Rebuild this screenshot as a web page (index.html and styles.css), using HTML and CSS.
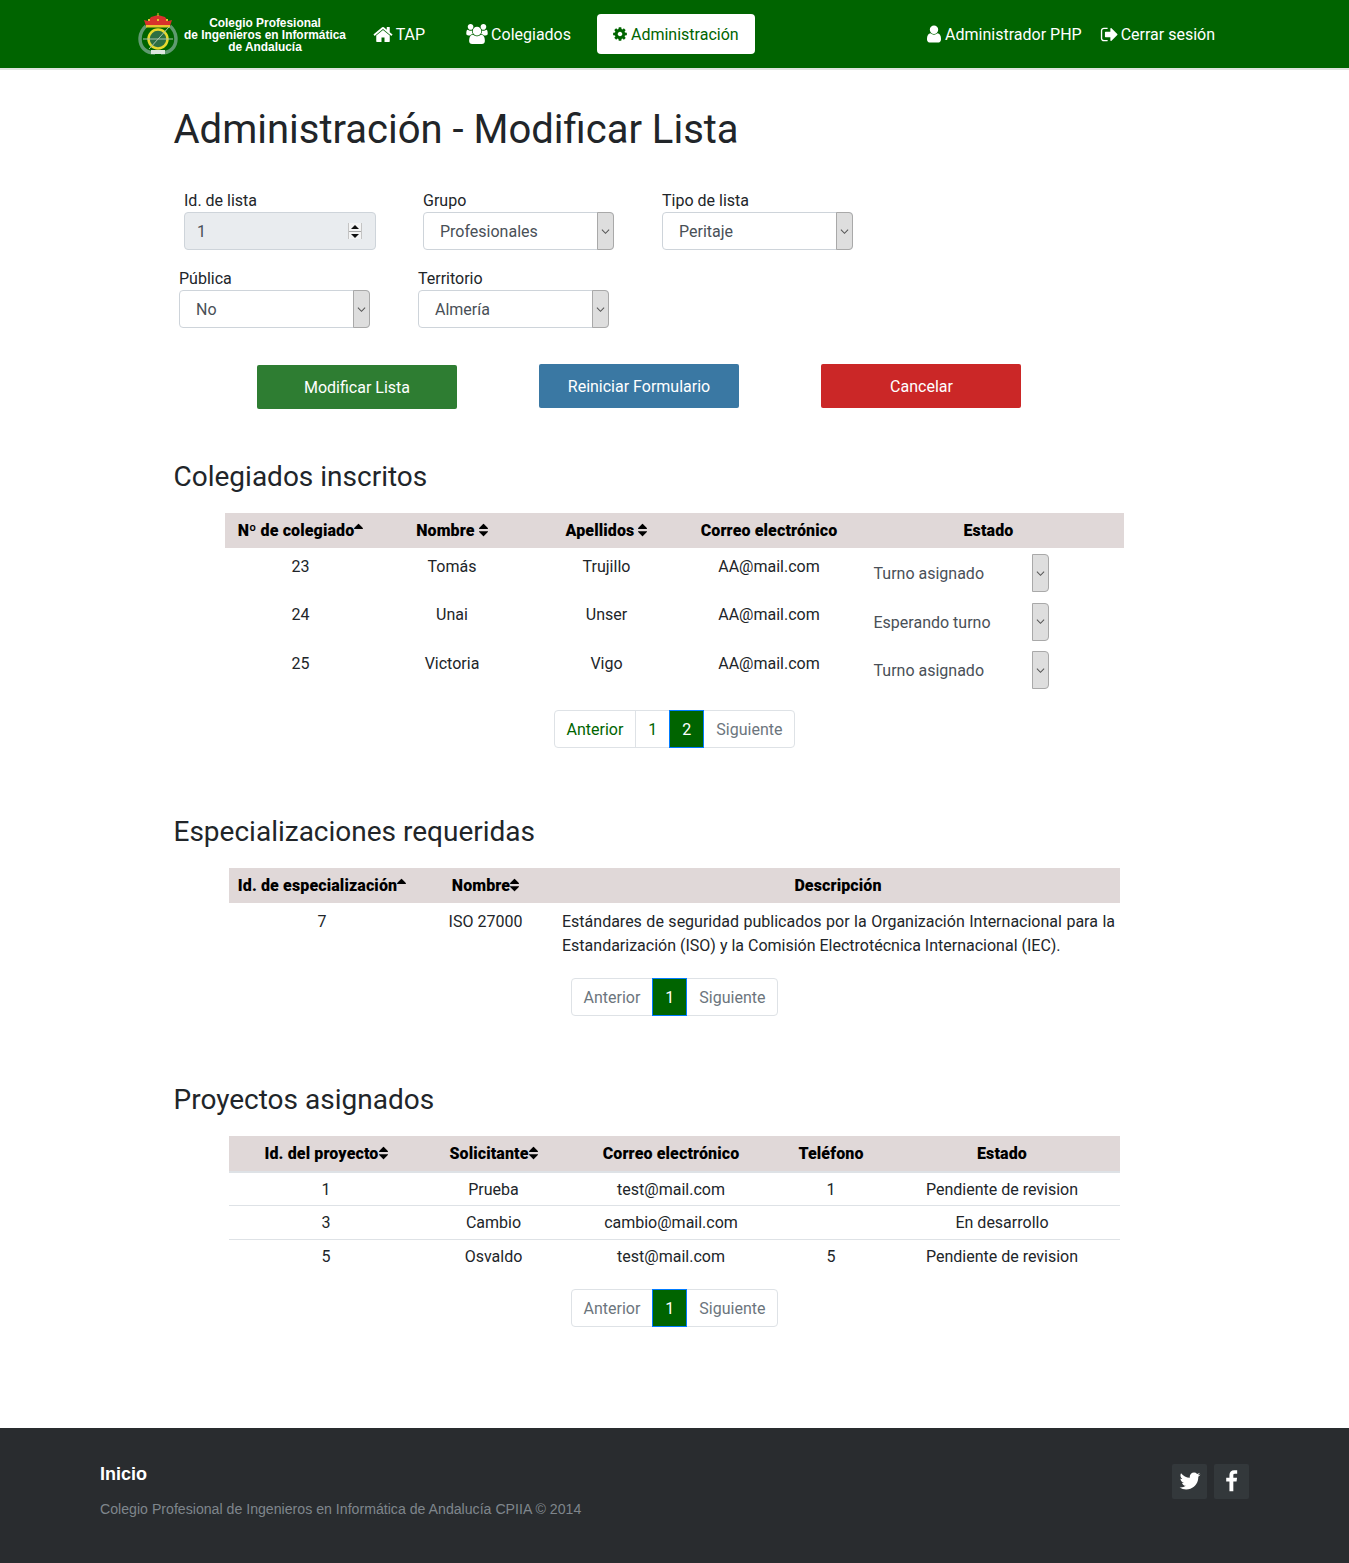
FILE: index.html
```html
<!DOCTYPE html>
<html lang="es">
<head>
<meta charset="utf-8">
<title>Administración - Modificar Lista</title>
<link rel="stylesheet" href="styles.css">
</head>
<body>

<svg class="defs" width="0" height="0">
  <symbol id="i-home" viewBox="0 0 1664 1792"><path d="M1408 992v480q0 26-19 45t-45 19h-384v-384h-256v384h-384q-26 0-45-19t-19-45v-480q0-1 .5-3t.5-3l575-474 575 474q1 2 1 6zm223-69l-62 74q-8 9-21 11h-3q-13 0-21-7l-692-577-692 577q-12 8-24 7-13-2-21-11l-62-74q-8-10-7-23.500t11-21.500l719-599q32-26 76-26t76 26l244 204v-195q0-14 9-23t23-9h192q14 0 23 9t9 23v408l219 182q10 8 11 21.500t-7 23.500z"/></symbol>
  <symbol id="i-users" viewBox="0 0 1920 1792"><path d="M593 896q-162 5-265 128h-134q-82 0-138-40.500t-56-118.500q0-353 124-353 6 0 43.500 21t97.500 42.500 119 21.500q67 0 133-23-5 37-5 66 0 139 81 256zm1071 637q0 120-73 189.500t-194 69.500h-874q-121 0-194-69.500t-73-189.500q0-53 3.500-103.500t14-109 26.500-108.500 43-97.500 62-81 85.500-53.500 111.500-20q10 0 43 21.500t73 48 107 48 135 21.500 135-21.500 107-48 73-48 43-21.500q61 0 111.500 20t85.500 53.500 62 81 43 97.500 26.500 108.500 14 109 3.500 103.500zm-1024-1277q0 106-75 181t-181 75-181-75-75-181 75-181 181-75 181 75 75 181zm704 384q0 159-112.500 271.500t-271.500 112.500-271.500-112.500-112.500-271.500 112.500-271.500 271.500-112.500 271.500 112.500 112.500 271.500zm576 225q0 78-56 118.500t-138 40.500h-134q-103-123-265-128 81-117 81-256 0-29-5-66 66 23 133 23 59 0 119-21.500t97.500-42.500 43.500-21q124 0 124 353zm-128-609q0 106-75 181t-181 75-181-75-75-181 75-181 181-75 181 75 75 181z"/></symbol>
  <symbol id="i-cog" viewBox="0 0 1536 1792"><path d="M1024 896q0-106-75-181t-181-75-181 75-75 181 75 181 181 75 181-75 75-181zm512-109v222q0 12-8 23t-20 13l-185 28q-19 54-39 91 35 50 107 138 10 12 10 25t-9 23q-27 37-99 108t-94 71q-12 0-26-9l-138-108q-44 23-91 38-16 136-29 186-7 28-36 28h-222q-14 0-24.500-8.500t-11.500-21.500l-28-184q-49-16-90-37l-141 107q-10 9-25 9-14 0-25-11-126-114-165-168-7-10-7-23 0-12 8-23 15-21 51-66.500t54-70.500q-27-50-41-99l-183-27q-13-2-21-12.500t-8-23.500v-222q0-12 8-23t19-13l186-28q14-46 39-92-40-57-107-138-10-12-10-24 0-10 9-23 26-36 98.500-107.500t94.500-71.500q13 0 26 10l138 107q44-23 91-38 16-136 29-186 7-28 36-28h222q14 0 24.500 8.500t11.500 21.500l28 184q49 16 90 37l142-107q9-9 24-9 13 0 25 10 129 119 165 170 7 8 7 22 0 12-8 23-15 21-51 66.500t-54 70.500q26 50 41 98l183 28q13 2 21 12.500t8 23.500z"/></symbol>
  <symbol id="i-user" viewBox="0 0 1280 1792"><path d="M1280 1399q0 109-62.500 187t-150.500 78h-854q-88 0-150.500-78t-62.500-187q0-85 8.500-160.500t31.500-152 58.500-131 94-89 134.500-34.500q131 128 313 128t313-128q76 0 134.500 34.500t94 89 58.500 131 31.500 152 8.500 160.500zm-256-887q0 159-112.500 271.500t-271.500 112.500-271.500-112.500-112.500-271.500 112.500-271.500 271.500-112.500 271.500 112.500 112.500 271.500z"/></symbol>
  <symbol id="i-out" viewBox="0 0 1664 1792"><path d="M704 1440q0 4 1 20t.5 26.500-3 23.500-10 19.500-20.500 6.500h-320q-119 0-203.500-84.500t-84.500-203.500v-704q0-119 84.500-203.500t203.500-84.500h320q13 0 22.500 9.500t9.500 22.500q0 4 1 20t.5 26.500-3 23.500-10 19.500-20.500 6.500h-320q-66 0-113 47t-47 113v704q0 66 47 113t113 47h312l11.500 1 11.500 3 8 5.500 7 9 2 13.500zm928-544q0 26-19 45l-544 544q-19 19-45 19t-45-19-19-45v-288h-448q-26 0-45-19t-19-45v-384q0-26 19-45t45-19h448v-288q0-26 19-45t45-19 45 19l544 544q19 19 19 45z"/></symbol>
  <symbol id="i-sort" viewBox="0 0 1024 1792"><path d="M1024 1088q0 26-19 45l-448 448q-19 19-45 19t-45-19l-448-448q-19-19-19-45t19-45 45-19h896q26 0 45 19t19 45zm0-384q0 26-19 45t-45 19h-896q-26 0-45-19t-19-45 19-45l448-448q19-19 45-19t45 19l448 448q19 19 19 45z"/></symbol>
  <symbol id="i-asc" viewBox="0 0 1024 1792"><path d="M1024 704q0 26-19 45t-45 19h-896q-26 0-45-19t-19-45 19-45l448-448q19-19 45-19t45 19l448 448q19 19 19 45z"/></symbol>
  <symbol id="i-chev" viewBox="0 0 8 6"><path d="M.8 1.4 4 4.6l3.200-3.200" fill="none" stroke="#555" stroke-width=".9"/></symbol>
  <symbol id="i-tw" viewBox="0 0 1664 1792"><path d="M1620 408q-67 98-162 167 1 14 1 42 0 130-38 259.500t-115.500 248.500-184.500 210.500-258 146-323 54.500q-271 0-496-145 35 4 78 4 225 0 401-138-105-2-188-64.500t-114-159.500q33 5 61 5 43 0 85-11-112-23-185.500-111.500t-73.500-205.500v-4q68 38 146 41-66-44-105-115t-39-154q0-88 44-163 121 149 294.500 238.500t371.500 99.500q-8-38-8-74 0-134 94.500-228.500t228.500-94.500q140 0 236 102 109-21 205-78-37 115-142 178 92-10 184-50z"/></symbol>
  <symbol id="i-fb" viewBox="0 0 1024 1792"><path d="M959 12v264h-157q-86 0-116 36t-30 108v189h293l-39 296h-254v759h-306v-759h-255v-296h255v-218q0-186 104-288.500t277-102.500q147 0 228 12z"/></symbol>
</svg>

<nav class="barra">
  <svg class="escudo" viewBox="0 0 40 42" width="40" height="42">
    <path d="M8 13C1 19 0 30 6 36c3 3 7 4 11 4" fill="none" stroke="#5f9a70" stroke-width="3.500"/>
    <path d="M32 13c7 6 8 17 2 23-3 3-7 4-11 4" fill="none" stroke="#5f9a70" stroke-width="3.500"/>
    <path d="M8 13 6 7l4 1 3-4 7-2 7 2 3 4 4-1-2 6z" fill="#d8322c"/>
    <path d="M8 12h24v2.500H8z" fill="#e8c62e"/>
    <path d="M19.500 0h1v3h-1zM10 6h2v2h-2zM19 6h2v2h-2zM28 6h2v2h-2z" fill="#e8c62e"/>
    <circle cx="20" cy="26" r="9.500" fill="#2d6f42" stroke="#e8d92e" stroke-width="2.500"/>
    <path d="M5 26h30M31 14 11 36" stroke="#a9c4ae" stroke-width="1"/>
    <path d="M13 37h14v4H13z" fill="#dfe8e0"/>
  </svg>
  <div class="marca">Colegio Profesional<br>de Ingenieros en Informática<br>de Andalucía</div>
  <a class="enlace"><svg class="ico ico-home"><use href="#i-home"/></svg> TAP</a>
  <a class="enlace"><svg class="ico ico-users"><use href="#i-users"/></svg> Colegiados</a>
  <a class="enlace activo"><svg class="ico ico-cog"><use href="#i-cog"/></svg> Administración</a>
  <div class="usuario">
    <a><svg class="ico ico-user"><use href="#i-user"/></svg> Administrador PHP</a>
    <a><svg class="ico ico-out"><use href="#i-out"/></svg> Cerrar sesión</a>
  </div>
</nav>

<main class="contenido">
  <h1>Administración - Modificar Lista</h1>

  <div class="fila fila-a">
    <div class="campo">
      <label>Id. de lista</label>
      <div class="control bloqueado">
        <span class="valor-num">1</span>
        <span class="giro"><i class="giro-up"></i><i class="giro-down"></i></span>
      </div>
    </div>
    <div class="campo">
      <label>Grupo</label>
      <div class="control"><span class="valor">Profesionales</span><span class="flecha"><svg><use href="#i-chev"/></svg></span></div>
    </div>
    <div class="campo">
      <label>Tipo de lista</label>
      <div class="control"><span class="valor">Peritaje</span><span class="flecha"><svg><use href="#i-chev"/></svg></span></div>
    </div>
  </div>
  <div class="fila fila-b">
    <div class="campo">
      <label>Pública</label>
      <div class="control"><span class="valor">No</span><span class="flecha"><svg><use href="#i-chev"/></svg></span></div>
    </div>
    <div class="campo">
      <label>Territorio</label>
      <div class="control"><span class="valor">Almería</span><span class="flecha"><svg><use href="#i-chev"/></svg></span></div>
    </div>
  </div>

  <div class="botones">
    <button class="btn verde">Modificar Lista</button>
    <button class="btn azul">Reiniciar Formulario</button>
    <button class="btn rojo">Cancelar</button>
  </div>

  <h3 class="titulo-primero">Colegiados inscritos</h3>
  <div class="bloque ancho">
    <table class="tabla t1">
      <colgroup><col class="c151"><col class="c152"><col class="c157"><col class="c168"><col></colgroup>
      <thead>
        <tr>
          <th>Nº de colegiado<svg class="orden"><use href="#i-asc"/></svg></th>
          <th>Nombre <svg class="orden"><use href="#i-sort"/></svg></th>
          <th>Apellidos <svg class="orden"><use href="#i-sort"/></svg></th>
          <th>Correo electrónico</th>
          <th>Estado</th>
        </tr>
      </thead>
      <tbody>
        <tr>
          <td>23</td><td>Tomás</td><td>Trujillo</td><td>AA@mail.com</td>
          <td class="celda-sel"><div class="control sin-borde"><span class="valor">Turno asignado</span><span class="flecha"><svg><use href="#i-chev"/></svg></span></div></td>
        </tr>
        <tr>
          <td>24</td><td>Unai</td><td>Unser</td><td>AA@mail.com</td>
          <td class="celda-sel"><div class="control sin-borde"><span class="valor">Esperando turno</span><span class="flecha"><svg><use href="#i-chev"/></svg></span></div></td>
        </tr>
        <tr>
          <td>25</td><td>Victoria</td><td>Vigo</td><td>AA@mail.com</td>
          <td class="celda-sel"><div class="control sin-borde"><span class="valor">Turno asignado</span><span class="flecha"><svg><use href="#i-chev"/></svg></span></div></td>
        </tr>
      </tbody>
    </table>
    <ul class="paginas">
      <li class="verde-txt">Anterior</li>
      <li class="verde-txt">1</li>
      <li class="actual">2</li>
      <li>Siguiente</li>
    </ul>
  </div>

  <h3>Especializaciones requeridas</h3>
  <div class="bloque estrecho">
    <table class="tabla t2">
      <colgroup><col class="c186"><col class="c141"><col></colgroup>
      <thead>
        <tr>
          <th>Id. de especialización<svg class="orden"><use href="#i-asc"/></svg></th>
          <th>Nombre<svg class="orden"><use href="#i-sort"/></svg></th>
          <th>Descripción</th>
        </tr>
      </thead>
      <tbody>
        <tr>
          <td>7</td><td>ISO 27000</td>
          <td class="texto">Estándares de seguridad publicados por la Organización Internacional para la Estandarización (ISO) y la Comisión Electrotécnica Internacional (IEC).</td>
        </tr>
      </tbody>
    </table>
    <ul class="paginas">
      <li>Anterior</li>
      <li class="actual">1</li>
      <li>Siguiente</li>
    </ul>
  </div>

  <h3>Proyectos asignados</h3>
  <div class="bloque estrecho">
    <table class="tabla t3">
      <colgroup><col class="c194"><col class="c141"><col class="c214"><col class="c106"><col></colgroup>
      <thead>
        <tr>
          <th>Id. del proyecto<svg class="orden"><use href="#i-sort"/></svg></th>
          <th>Solicitante<svg class="orden"><use href="#i-sort"/></svg></th>
          <th>Correo electrónico</th>
          <th>Teléfono</th>
          <th>Estado</th>
        </tr>
      </thead>
      <tbody>
        <tr><td>1</td><td>Prueba</td><td>test@mail.com</td><td>1</td><td>Pendiente de revision</td></tr>
        <tr><td>3</td><td>Cambio</td><td>cambio@mail.com</td><td></td><td>En desarrollo</td></tr>
        <tr><td>5</td><td>Osvaldo</td><td>test@mail.com</td><td>5</td><td>Pendiente de revision</td></tr>
      </tbody>
    </table>
    <ul class="paginas">
      <li>Anterior</li>
      <li class="actual">1</li>
      <li>Siguiente</li>
    </ul>
  </div>
</main>

<footer class="pie">
  <div>
    <div class="pie-inicio">Inicio</div>
    <div class="pie-copy">Colegio Profesional de Ingenieros en Informática de Andalucía CPIIA © 2014</div>
  </div>
  <div class="redes">
    <a class="red"><svg class="ico-tw"><use href="#i-tw"/></svg></a>
    <a class="red"><svg class="ico-fb"><use href="#i-fb"/></svg></a>
  </div>
</footer>

</body>
</html>
```

FILE: styles.css
```css
* {
    box-sizing: border-box;
}

body {
    margin: 0;
    font-family: "Roboto", "Liberation Sans", sans-serif;
    font-size: 16px;
    line-height: 24px;
    color: #212529;
    background-color: #fff;
}

.defs {
    position: absolute;
}

/* barra superior */
.barra {
    display: flex;
    align-items: center;
    height: 70px;
    padding: 0 134px 0 138px;
    background-color: #006400;
    border-bottom: 2px solid #dfe3df;
    color: #fff;
}

.escudo {
    flex: none;
}

.marca {
    width: 162px;
    margin-left: 6px;
    padding-top: 2px;
    font-family: "Liberation Sans", sans-serif;
    font-size: 11.900px;
    font-weight: bold;
    line-height: 12px;
    text-align: center;
    white-space: nowrap;
}

.enlace {
    display: flex;
    align-items: center;
    height: 40px;
    padding: 2px 16px 0;
    margin-left: 10px;
    border-radius: 4px;
    white-space: pre;
}

.marca + .enlace {
    margin-left: 12px;
}

.activo {
    background-color: #fff;
    color: #006400;
}

.ico {
    fill: currentColor;
    flex: none;
}

.ico-home {
    width: 20px;
    height: 21px;
    margin: -2px -1px 0;
}

.ico-users {
    width: 22px;
    height: 20px;
    margin: -2px -1px 0;
}

.ico-cog {
    width: 14px;
    height: 16px;
    margin-top: -2px;
}

.ico-user {
    width: 14px;
    height: 20px;
    margin-top: -2px;
}

.ico-out {
    width: 18px;
    height: 19px;
    margin: -2px -1px 0;
}

.usuario {
    display: flex;
    gap: 19px;
    margin-left: auto;
    padding-top: 2px;
}

.usuario a {
    display: flex;
    align-items: center;
    white-space: pre;
}

/* contenido */
.contenido {
    width: 1001px;
    margin: 0 auto;
}

h1 {
    margin: 36px 0 34px -.5px;
    font-size: 40px;
    font-weight: 400;
    line-height: 48px;
}

h3 {
    margin: 67px 0 19px -.5px;
    font-size: 28px;
    font-weight: 400;
    line-height: 34px;
}

.titulo-primero {
    margin-top: 51px;
}

.fila {
    display: flex;
    gap: 48px;
}

.fila-a {
    padding-left: 10px;
    margin-bottom: 16px;
}

.fila-b {
    padding-left: 5px;
}

.campo {
    width: 191px;
}

.campo label {
    display: block;
    height: 24px;
    padding-top: 1px;
}

.control {
    display: flex;
    align-items: center;
    justify-content: space-between;
    height: 38px;
    border: 1px solid #ced4da;
    border-radius: 4px;
    color: #495057;
    background-color: #fff;
}

.bloqueado {
    width: 192px;
    background-color: #e9ecef;
}

.valor {
    padding: 2px 0 0 16px;
}

.valor-num {
    padding: 2px 0 0 12px;
}

.flecha {
    display: flex;
    align-items: center;
    justify-content: center;
    align-self: stretch;
    width: 17px;
    margin: -1px -1px -1px 0;
    background-color: #dedede;
    border: 1px solid #a9a9a9;
    border-radius: 0 4px 4px 0;
}

.flecha svg {
    width: 9px;
    height: 7px;
}

.giro {
    display: flex;
    flex-direction: column;
    width: 14px;
    height: 16px;
    margin-right: 13px;
    background-color: #f4f4f4;
    border-left: 1px solid #c4c4c4;
    border-right: 1px solid #c4c4c4;
}

.giro i {
    flex: 1;
    display: block;
    position: relative;
}

.giro-up {
    border-bottom: 1px solid #a8a8a8;
}

.giro-up::after,
.giro-down::after {
    content: "";
    position: absolute;
    left: 2px;
    top: 2px;
    border-left: 4px solid transparent;
    border-right: 4px solid transparent;
}

.giro-up::after {
    border-bottom: 4px solid #111;
}

.giro-down::after {
    border-top: 4px solid #111;
}

.botones {
    display: flex;
    gap: 82px;
    margin-top: 36px;
    padding-left: 83px;
    align-items: flex-start;
}

.btn {
    width: 200px;
    height: 44px;
    padding: 0;
    border: 0;
    border-radius: 2px;
    font-family: inherit;
    font-size: 16px;
    color: #fff;
}

.verde {
    margin-top: 1px;
    background-color: #2e7d32;
}

.azul {
    background-color: #3a78a3;
}

.rojo {
    padding-left: 1px;
    background-color: #cb2727;
}

/* tablas */
.ancho {
    width: 899px;
    margin-left: 51px;
}

.estrecho {
    width: 891px;
    margin-left: 55px;
}

.tabla {
    width: 100%;
    table-layout: fixed;
    border-collapse: collapse;
    text-align: center;
}

.tabla th {
    height: 35px;
    padding: 0;
    background-color: #e0d8d8;
    color: #000;
    font-weight: 900;
    letter-spacing: .13px;
}

.tabla td {
    padding: 0;
    vertical-align: top;
}

.c151 { width: 151px; }
.c152 { width: 152px; }
.c157 { width: 157px; }
.c168 { width: 168px; }
.c186 { width: 186px; }
.c141 { width: 141px; }
.c194 { width: 194px; }
.c214 { width: 214px; }
.c106 { width: 106px; }

.orden {
    width: 9px;
    height: 16px;
    vertical-align: -2px;
    fill: #000;
}

.t1 tbody tr {
    height: 48.500px;
}

.t1 td {
    padding-top: 6.500px;
}

.t1 .celda-sel {
    padding-top: 6px;
}

.sin-borde {
    width: 192.500px;
    margin-left: 3.500px;
    text-align: left;
    border-color: transparent;
    background-color: transparent;
}

.t2 td {
    padding: 7px 0 5px;
}

.t2 .texto {
    padding-left: 6px;
    padding-right: 5px;
    text-align: justify;
}

.t3 th {
    height: 36px;
    border-bottom: 2px solid #dee2e6;
}

.t3 tbody tr {
    height: 33.500px;
    border-top: 1px solid #dee2e6;
}

.t3 tbody tr:first-child {
    border-top: 0;
}

.t3 td {
    padding-top: 5px;
}

.paginas {
    display: flex;
    justify-content: center;
    margin: 16.500px 0 0;
    padding: 0;
    list-style: none;
    line-height: 20px;
}

.t2 + .paginas {
    margin-top: 15px;
}

.t3 + .paginas {
    margin-top: 16px;
}

.paginas li {
    padding: 9px 12px 7px;
    margin-left: -1px;
    border: 1px solid #dee2e6;
    color: #6c757d;
    background-color: #fff;
}

.paginas li:first-child {
    margin-left: 0;
    border-radius: 4px 0 0 4px;
}

.paginas li:last-child {
    border-radius: 0 4px 4px 0;
}

.paginas .verde-txt {
    color: #006400;
}

.paginas .actual {
    position: relative;
    color: #fff;
    background-color: #006400;
    border-color: #007bff;
}

/* pie */
.pie {
    display: flex;
    justify-content: space-between;
    height: 135px;
    margin-top: 101px;
    padding: 34px 100px 0;
    background-color: #292c2f;
}

.pie-inicio {
    font-family: "Liberation Sans", sans-serif;
    font-size: 18px;
    font-weight: 700;
    color: #fff;
}

.pie-copy {
    margin-top: 11px;
    font-family: "Liberation Sans", sans-serif;
    font-size: 14.150px;
    color: #7f868c;
}

.redes {
    display: flex;
    gap: 7px;
    padding-top: 2px;
}

.red {
    display: flex;
    align-items: center;
    justify-content: center;
    width: 35px;
    height: 35px;
    border-radius: 2px;
    background-color: #33383b;
    fill: #fff;
}

.ico-tw {
    width: 22px;
    height: 24px;
}

.ico-fb {
    width: 13px;
    height: 23px;
}
```
